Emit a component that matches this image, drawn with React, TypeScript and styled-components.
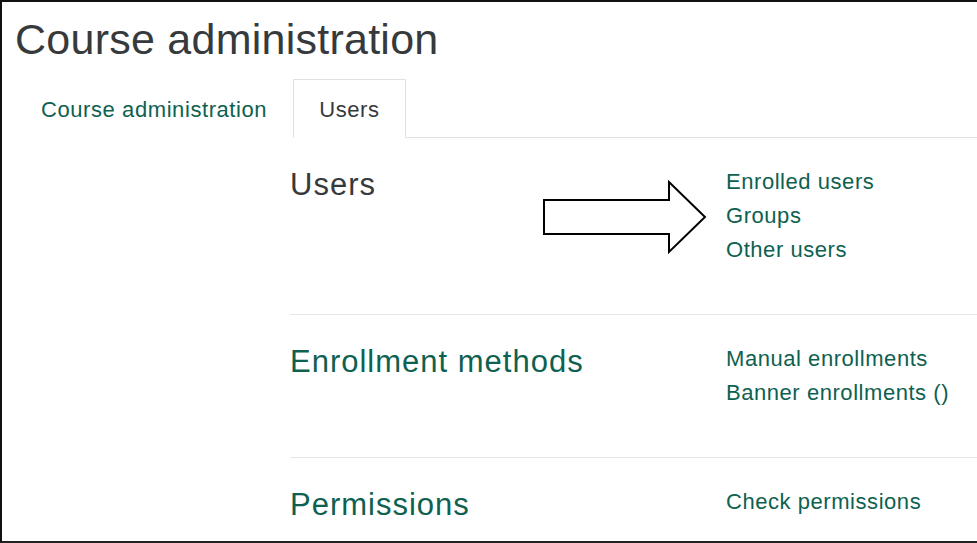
import styled, { createGlobalStyle } from 'styled-components';

const GlobalStyle = createGlobalStyle`
  html, body {
    margin: 0;
    padding: 0;
    background: #fff;
    overflow: hidden;
  }
  body {
    font-family: 'Liberation Sans', Arial, sans-serif;
  }
`;

// styled components
const Frame = styled.div`
  box-sizing: border-box;
  width: 977px;
  height: 543px;
  border-top: 2px solid #111;
  border-left: 2px solid #111;
  border-bottom: 2px solid #222;
  overflow: hidden;
  display: flex;
  flex-direction: column;
`;

const PageTitle = styled.h1`
  margin: 16px 0 0 13px;
  font-size: 43px;
  line-height: 1;
  font-weight: 400;
  letter-spacing: 0.25px;
  color: #373a3c;
`;

const TabBar = styled.nav`
  display: flex;
  margin: 18px 0 0 13px;
  border-bottom: 1px solid #dee2e6;
`;

const Tab = styled.a<{ $active?: boolean }>`
  box-sizing: border-box;
  display: flex;
  align-items: center;
  height: 59px;
  padding: 3px 25px 0;
  margin-bottom: -1px;
  font-size: 22px;
  letter-spacing: 0.58px;
  text-decoration: none;
  color: ${(p) => (p.$active ? '#373a3c' : '#0e6150')};
  background: #fff;
  border: 1px solid ${(p) => (p.$active ? '#dee2e6' : 'transparent')};
  border-bottom-color: ${(p) => (p.$active ? '#fff' : 'transparent')};
`;

const Sections = styled.div`
  display: flex;
  flex-direction: column;
  margin-left: 288px;
`;

const Section = styled.section<{ $last?: boolean }>`
  position: relative;
  display: grid;
  grid-template-columns: 436px 1fr;
  padding: 28px 0 47px;
  border-bottom: ${(p) => (p.$last ? 'none' : '1px solid #e6e6e6')};
`;

const Heading = styled.h2<{ $link?: boolean }>`
  margin: 0;
  font-size: 31px;
  line-height: 1.2;
  font-weight: 400;
  letter-spacing: 1px;
  color: ${(p) => (p.$link ? '#0e6150' : '#373a3c')};
`;

const LinkList = styled.ul`
  list-style: none;
  margin: -1px 0 0;
  padding: 0;
`;

const LinkItem = styled.li`
  font-size: 22px;
  line-height: 34px;
  letter-spacing: 0.55px;
  color: #0e6150;
`;

const Pointer = styled.svg`
  position: absolute;
  left: 252px;
  top: 42px;
`;

const sections = [
  {
    title: 'Users',
    link: false,
    items: ['Enrolled users', 'Groups', 'Other users'],
  },
  {
    title: 'Enrollment methods',
    link: true,
    items: ['Manual enrollments', 'Banner enrollments ()'],
  },
  {
    title: 'Permissions',
    link: true,
    items: ['Check permissions'],
  },
];

const App = () => {
  return (
    <>
      <GlobalStyle />
      <Frame>
        <PageTitle>Course administration</PageTitle>
        <TabBar>
          <Tab>Course administration</Tab>
          <Tab $active>Users</Tab>
        </TabBar>
        <Sections>
          {sections.map((s, i) => (
            <Section key={s.title} $last={i === sections.length - 1}>
              <Heading $link={s.link}>{s.title}</Heading>
              <LinkList>
                {s.items.map((item) => (
                  <LinkItem key={item}>{item}</LinkItem>
                ))}
              </LinkList>
              {i === 0 && (
                <Pointer width="167" height="76" viewBox="0 0 167 76">
                  <polygon
                    points="2,20 127,20 127,2 163,37 127,72 127,54 2,54"
                    fill="#fff"
                    stroke="#000"
                    strokeWidth="2"
                  />
                </Pointer>
              )}
            </Section>
          ))}
        </Sections>
      </Frame>
    </>
  );
};

export default App;
